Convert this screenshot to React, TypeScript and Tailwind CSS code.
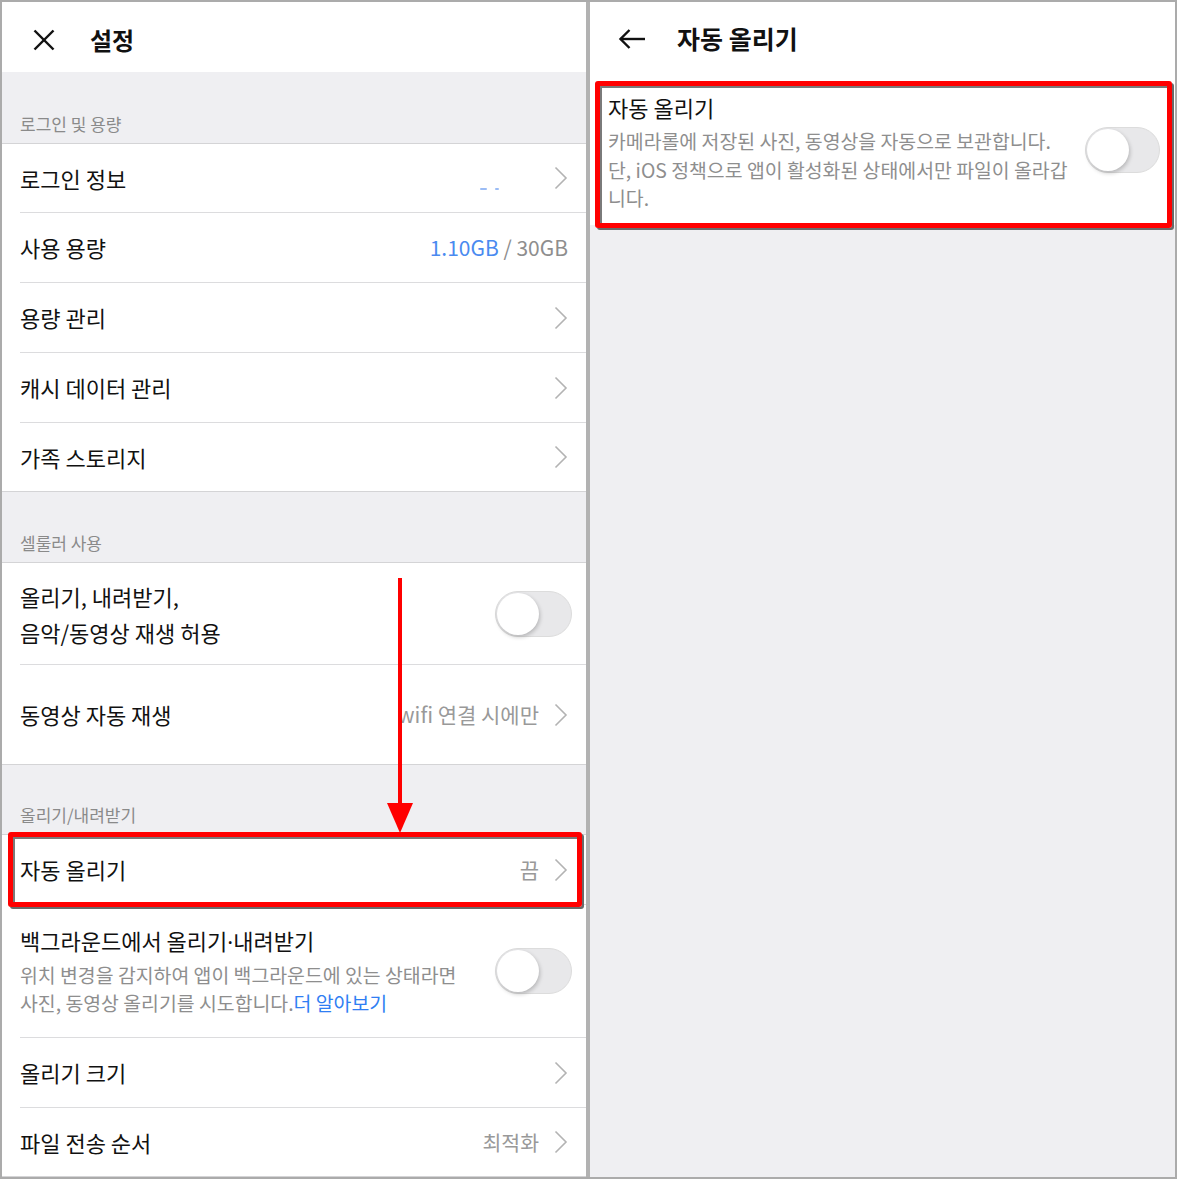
import React from 'react'

const font = { fontFamily: '"Noto Sans CJK KR", "Noto Sans", sans-serif' }

function Chevron() {
  return (
    <svg width="14" height="24" viewBox="0 0 14 24" className="shrink-0">
      <polyline points="1.5,1.5 12,12 1.5,22.5" fill="none" stroke="#b3b3b3" strokeWidth="1.6" />
    </svg>
  )
}

function Toggle({ w = 77 }: { w?: number }) {
  return (
    <div
      className="relative h-[46px] shrink-0 rounded-full bg-[#e8e8ea] border border-[#dcdcdc]"
      style={{ width: w }}
    >
      <div className="absolute left-[1px] top-[1px] h-[42px] w-[42px] rounded-full bg-white shadow-[1px_2px_4px_rgba(0,0,0,0.22)]" />
    </div>
  )
}

function SectionLabel({ text, h }: { text: string; h: string }) {
  return (
    <div className={`${h} flex items-end pl-[18px] pb-[8px] border-b border-[#d4d4d6] bg-[#efeff2]`}>
      <span className="text-[17px] leading-[22px] text-[#8a8a8a]">{text}</span>
    </div>
  )
}

// h = 전체 높이 (border-box). last 이면 바깥쪽에 전체 폭 구분선이 붙음
function Row({
  label,
  value,
  chevron = true,
  h = 'h-[70px]',
  last = false,
  children,
}: {
  label: string
  value?: React.ReactNode
  chevron?: boolean
  h?: string
  last?: boolean
  children?: React.ReactNode
}) {
  return (
    <div className={`relative bg-white pl-[18px] ${last ? 'border-b border-[#d4d4d6]' : ''}`}>
      <div className={`${h} flex items-center pr-[18px] ${last ? '' : 'border-b border-[#dcdcde]'}`}>
        <span className="flex-1 text-[22px] text-[#111]">{label}</span>
        {value}
        {chevron && <span className="ml-[15px] flex"><Chevron /></span>}
      </div>
      {children}
    </div>
  )
}

function RedBox({ className }: { className: string }) {
  return (
    <div
      className={`pointer-events-none absolute rounded-[3px] border-[5px] border-[#ff0000] shadow-[2px_2px_0_#6a6a6a,inset_2px_2px_0_#7a7a7a] ${className}`}
    />
  )
}

export default function App() {
  return (
    <div style={font} className="relative flex h-[1179px] w-[1177px] border-2 border-[#ababab] bg-white">
      {/* 왼쪽: 설정 */}
      <div className="flex w-[584px] flex-col bg-white">
        <div className="flex h-[70px] items-center pl-[31px] pt-[5px]">
          <svg width="22" height="22" viewBox="0 0 22 22">
            <line x1="1.5" y1="1.5" x2="20.5" y2="20.5" stroke="#111" strokeWidth="2.4" />
            <line x1="20.5" y1="1.5" x2="1.5" y2="20.5" stroke="#111" strokeWidth="2.4" />
          </svg>
          <span className="ml-[35px] text-[24px] font-bold text-[#111]">설정</span>
        </div>

        <SectionLabel text="로그인 및 용량" h="h-[72px]" />
        <Row
          label="로그인 정보"
          h="h-[69px]"
          value={
            <span className="mr-[40px] mt-[22px] flex gap-[8px]">
              <span className="h-[2px] w-[7px] rounded-full bg-[#9bbcf5]" />
              <span className="h-[2px] w-[4px] rounded-full bg-[#9bbcf5]" />
            </span>
          }
        />
        <Row
          label="사용 용량"
          chevron={false}
          value={
            <span className="text-[21px]">
              <span className="text-[#4a8af0]">1.10GB</span>
              <span className="text-[#8e8e8e]"> / 30GB</span>
            </span>
          }
        />
        <Row label="용량 관리" />
        <Row label="캐시 데이터 관리" />
        <Row label="가족 스토리지" h="h-[68px]" last />

        <SectionLabel text="셀룰러 사용" h="h-[71px]" />
        <div className="bg-white pl-[18px]">
          <div className="flex h-[102px] items-center border-b border-[#dcdcde] pr-[14px]">
            <div className="flex-1 text-[22px] leading-[36px] text-[#111]">
              <div>올리기, 내려받기,</div>
              <div>음악/동영상 재생 허용</div>
            </div>
            <Toggle />
          </div>
        </div>
        <Row
          label="동영상 자동 재생"
          h="h-[99px]"
          last
          value={<span className="text-[21px] text-[#999]">wifi 연결 시에만</span>}
        />

        <SectionLabel text="올리기/내려받기" h="h-[70px]" />
        <Row label="자동 올리기" value={<span className="text-[21px] text-[#999]">끔</span>}>
          <RedBox className="-top-[3px] -bottom-[2px] left-[6px] right-[4px]" />
        </Row>
        <div className="bg-white pl-[18px]">
          <div className="flex h-[133px] items-center border-b border-[#dcdcde] pr-[14px]">
            <div className="flex-1">
              <div className="text-[22px] leading-[28px] text-[#111]">
                백그라운드에서 올리기<span style={{ fontFamily: '"Noto Sans", sans-serif' }}>·</span>내려받기
              </div>
              <div className="mt-[6px] text-[19.4px] leading-[28px] text-[#8e8e8e]">
                <div className="whitespace-nowrap">위치 변경을 감지하여 앱이 백그라운드에 있는 상태라면</div>
                <div className="whitespace-nowrap">
                  사진, 동영상 올리기를 시도합니다.<span className="text-[#2f7ef3]">더 알아보기</span>
                </div>
              </div>
            </div>
            <Toggle />
          </div>
        </div>
        <Row label="올리기 크기" />
        <Row label="파일 전송 순서" h="h-[68px]" last value={<span className="text-[20.5px] text-[#999]">최적화</span>} />
        <div className="flex-1 bg-white" />
      </div>

      <div className="w-[4px] bg-[#b2b2b2]" />

      {/* 오른쪽: 자동 올리기 */}
      <div className="flex flex-1 flex-col bg-[#efeff2]">
        <div className="flex h-[80px] items-center bg-white pb-[6px] pl-[28px]">
          <svg width="28" height="22" viewBox="0 0 28 22">
            <line x1="2.5" y1="11" x2="27" y2="11" stroke="#111" strokeWidth="2.4" />
            <polyline points="11.5,2 2.5,11 11.5,20" fill="none" stroke="#111" strokeWidth="2.4" />
          </svg>
          <span className="ml-[31px] text-[25px] font-bold text-[#111]">자동 올리기</span>
        </div>
        <div className="relative flex bg-white pl-[18px] pr-[15px] pt-[11px] pb-[12px]">
          <div className="flex-1">
            <div className="text-[22px] leading-[28px] text-[#111]">자동 올리기</div>
            <div className="mt-[6px] text-[19.4px] leading-[28.5px] text-[#8e8e8e]">
              <div className="whitespace-nowrap">카메라롤에 저장된 사진, 동영상을 자동으로 보관합니다.</div>
              <div className="whitespace-nowrap">단, iOS 정책으로 앱이 활성화된 상태에서만 파일이 올라갑</div>
              <div className="whitespace-nowrap">니다.</div>
            </div>
          </div>
          <div className="mt-[34px] self-start">
            <Toggle w={75} />
          </div>
          <RedBox className="-top-[1px] -bottom-[3px] left-[5px] right-[3px]" />
        </div>
      </div>

      {/* 빨간 화살표 */}
      <svg
        className="pointer-events-none absolute left-[383px] top-[576px]"
        width="30"
        height="256"
        viewBox="0 0 30 256"
      >
        <line x1="15" y1="0" x2="15" y2="230" stroke="#ff0000" strokeWidth="4" />
        <polygon points="2,225 28,225 15,255" fill="#ff0000" />
      </svg>
    </div>
  )
}
